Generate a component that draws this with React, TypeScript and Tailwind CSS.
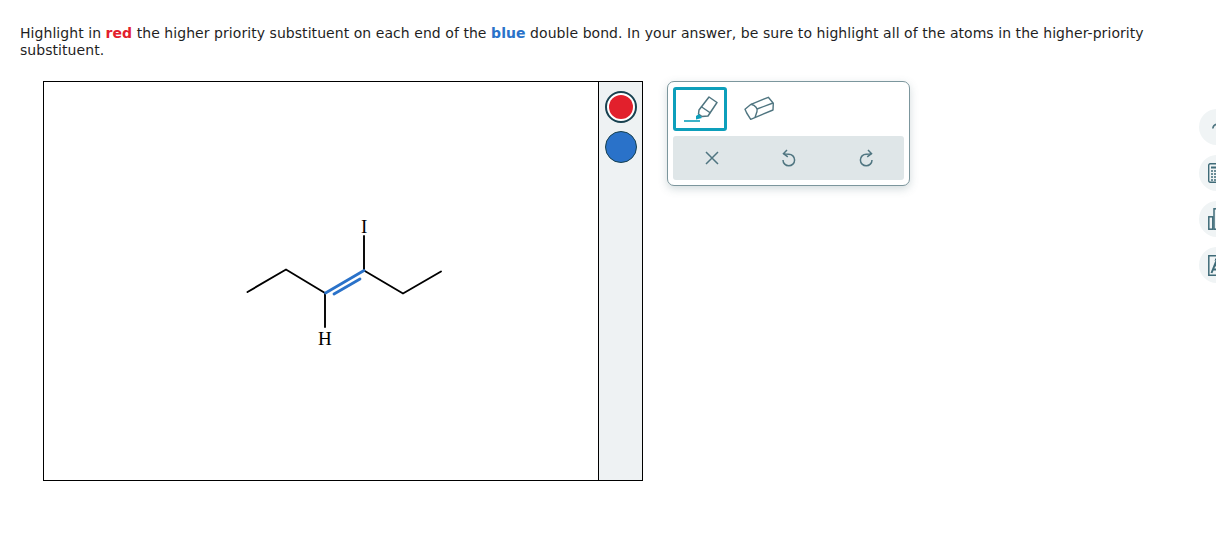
import React from "react";

const ic = "#4f7580";

function Molecule() {
  return (
    <svg width="554" height="398" viewBox="0 0 554 398" className="block">
      <g transform="translate(-44,-82)">
        <g stroke="#000" strokeWidth="1.9" fill="none" strokeLinecap="round">
          <path d="M247.5 292 L286 269.5 L325 293" />
          <path d="M364 270.5 L403 293.5 L441 271.5" />
          <path d="M325 293 L325 327" />
          <path d="M364 270.5 L364 236" />
        </g>
        <g stroke="#2a72c9" strokeWidth="2.8" fill="none" strokeLinecap="round">
          <path d="M325.5 293 L364 270.5" />
          <path d="M334 294 L360 279" />
        </g>
      </g>
    </svg>
  );
}

function Marker() {
  return (
    <svg width="36" height="34" viewBox="0 0 36 34" fill="none">
      <path d="M27 5 L35 10.5 L26 24 L20 24.5 L16.5 22 L17 18 Z" stroke={ic} strokeWidth="1.5" strokeLinejoin="round" />
      <path d="M19 14.5 L28.5 21" stroke={ic} strokeWidth="1.5" />
      <path d="M14 24 L17 22 L20 26 L14 27.5 Z" fill="#0d9fbb" />
      <path d="M2 29 H18" stroke="#0d9fbb" strokeWidth="1.6" />
    </svg>
  );
}

function Eraser() {
  return (
    <svg width="32" height="26" viewBox="0 0 32 26" fill="none" stroke={ic} strokeWidth="1.4" strokeLinejoin="round">
      <path d="M2 13.3 L8 8.3 L25.3 1.3 L30.3 7.3 L30 14 L7.7 23.3 L3.7 17 Z" />
      <path d="M8 8.3 C12.5 9.5 15 12.5 14 15.5 L12 21.5" />
      <path d="M14 13 L30 7" />
    </svg>
  );
}

function XIcon() {
  return (
    <svg width="14" height="14" viewBox="0 0 14 14" stroke={ic} strokeWidth="1.5" fill="none">
      <path d="M1 1 L13 13 M13 1 L1 13" />
    </svg>
  );
}

function Undo({ flip }: { flip?: boolean }) {
  return (
    <svg width="14" height="18" viewBox="0 0 14 18" stroke={ic} strokeWidth="1.5" fill="none" className={flip ? "-scale-x-100" : ""}>
      <path d="M5 1 L1.5 4.6 L5.8 7.8" />
      <path d="M1.5 4.6 C3 5 5 5.2 6.8 5.2 A5.8 5.8 0 1 1 1 11" />
    </svg>
  );
}

function Calc() {
  return (
    <svg width="18" height="20" viewBox="0 0 18 20" fill="none" stroke="#3f6b78" strokeWidth="1.4">
      <rect x="0.7" y="0.7" width="16" height="18.6" rx="1.5" />
      <path d="M3 4.5 H15" strokeWidth="2" />
      <path d="M3 8 H15 M3 11 H15 M3 14 H15 M3 17 H15" strokeDasharray="2 1" />
    </svg>
  );
}

function Bars() {
  return (
    <svg width="18" height="22" viewBox="0 0 18 22" fill="none" stroke="#3f6b78" strokeWidth="1.5">
      <rect x="0.8" y="8.8" width="4" height="12.4" />
      <rect x="6" y="0.8" width="4" height="20.4" />
    </svg>
  );
}

function Periodic() {
  return (
    <svg width="18" height="21" viewBox="0 0 18 21" fill="none" stroke="#3f6b78" strokeWidth="1.5">
      <path d="M18 0.8 H0.8 V20.2 H18" />
      <path d="M3.5 18 L7.5 8 L11 18 M4.8 14.5 H10" strokeWidth="2" />
      <path d="M7 5.5 L8 3.5 V6" strokeWidth="1" />
    </svg>
  );
}

function SideButton({ children, pad }: { children?: React.ReactNode; pad?: string }) {
  return (
    <div className={`w-9 h-9 shrink-0 rounded-full bg-[#f0f4f5] flex items-center justify-start overflow-hidden ${pad ?? "pl-[9px]"}`}>
      {children}
    </div>
  );
}

export default function App() {
  return (
    <div className="relative w-[1216px] h-[533px] overflow-hidden bg-white font-['Verdana','DejaVu_Sans',sans-serif] text-[#1f1f1f]">
      <div className="pt-[25px] pl-5 text-[14px] tracking-[0.055px] leading-[17px]">
        Highlight in <b className="text-[#e2202c]">red</b> the higher priority substituent on each end of the{" "}
        <b className="text-[#2a72c9]">blue</b> double bond. In your answer, be sure to highlight all of the atoms in the
        higher-priority
        <br />
        substituent.
      </div>

      <div className="flex items-start ml-[43px] mt-[22px]">
        <div className="relative flex w-[600px] h-[400px] border border-black">
          <div className="relative w-[554px] h-[398px] bg-white">
            <Molecule />
            <span className="absolute left-[317px] top-[135px] font-['Liberation_Serif',serif] text-[19px] leading-5 text-black">I</span>
            <span className="absolute left-[274px] top-[247px] font-['Liberation_Serif',serif] text-[19px] leading-5 text-black">H</span>
          </div>
          <div className="flex-1 bg-[#eef2f3] border-l border-black flex flex-col items-center pt-[9px] pl-px gap-[8px]">
            <div className="w-[32px] h-[32px] rounded-full border-2 border-[#17414f] bg-white flex items-center justify-center">
              <div className="w-6 h-6 rounded-full bg-[#e2202c]" />
            </div>
            <div className="w-[32px] h-[32px] rounded-full border border-[#17414f] bg-[#2a72c9]" />
          </div>
        </div>

        <div className="ml-6 w-[243px] h-[105px] rounded-[7px] border border-[#7c969d] bg-white p-[5px] shadow-[0_3px_8px_rgba(80,110,120,0.25)]">
          <div className="flex items-center gap-[16px]">
            <div className="w-[54px] h-[44px] rounded-[3px] border-[3px] border-[#0d9fbb] flex items-center justify-center">
              <Marker />
            </div>
            <Eraser />
          </div>
          <div className="mt-[5px] h-[44px] rounded-[3px] bg-[#dfe6e8] flex items-center">
            <div className="w-[78px] flex justify-center"><XIcon /></div>
            <div className="w-[77px] flex justify-center"><Undo /></div>
            <div className="w-[77px] flex justify-center"><Undo flip /></div>
          </div>
        </div>
      </div>

      <div className="absolute left-[1199px] top-[109px] flex flex-col gap-[10px]">
        <SideButton pad="pl-[13px]">
          <svg width="8" height="8" viewBox="0 0 8 8" fill="none" stroke="#4f7580" strokeWidth="1.6"><path d="M0.8 5.5 C1 3 2.5 1.5 5 1" /></svg>
        </SideButton>
        <SideButton><Calc /></SideButton>
        <SideButton><Bars /></SideButton>
        <SideButton><Periodic /></SideButton>
      </div>
    </div>
  );
}
